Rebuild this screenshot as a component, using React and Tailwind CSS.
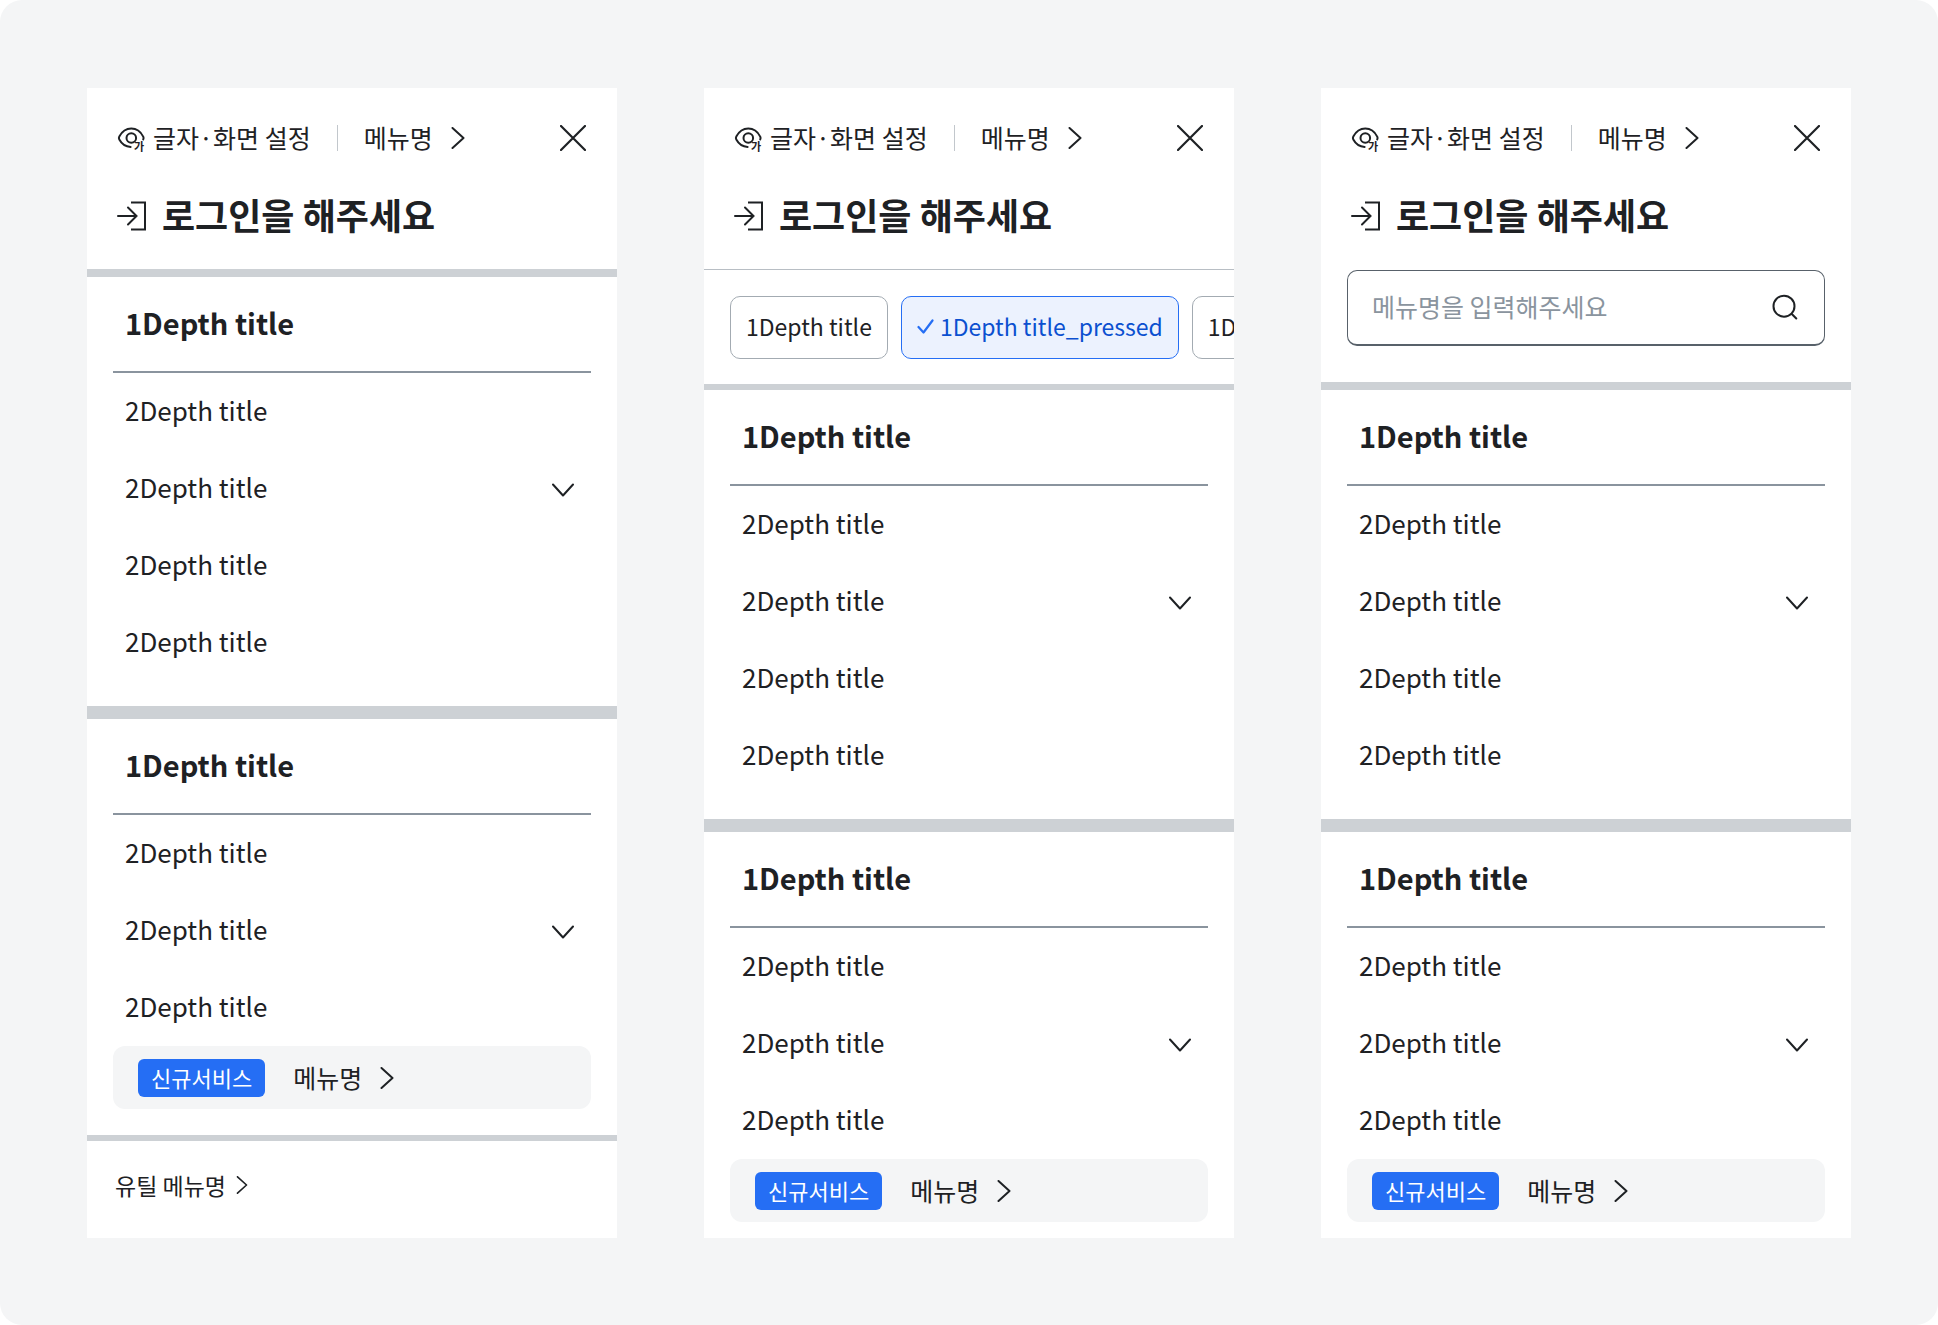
import { useState } from 'react';

const FIRST_MENU = [
  { id: 'a1', label: '2Depth title' },
  { id: 'a2', label: '2Depth title', expandable: true },
  { id: 'a3', label: '2Depth title' },
  { id: 'a4', label: '2Depth title' },
];

const SECOND_MENU = [
  { id: 'b1', label: '2Depth title' },
  { id: 'b2', label: '2Depth title', expandable: true },
  { id: 'b3', label: '2Depth title' },
];

const CHIPS = ['1Depth title', '1Depth title_pressed', '1Depth title'];

function EyeTextIcon() {
  return (
    <svg viewBox="0 0 28 28" className="w-7 h-7 shrink-0 overflow-visible" fill="none" stroke="currentColor" strokeWidth="2" strokeLinecap="round" aria-hidden="true">
      <path d="M26.200 15.500c.5-.9.5-2 0-2.900C23.700 7.800 19.400 4.600 14.300 4.600S4.900 7.800 2.300 12.600c-.5.900-.5 2 0 2.900C4.700 19.900 8.800 22.700 13.600 22.900" />
      <circle cx="14.300" cy="14" r="4.800" />
      <text x="17" y="27" fontSize="11" fontWeight="700" fill="currentColor" stroke="none">가</text>
    </svg>
  );
}

function LoginIcon() {
  return (
    <svg viewBox="0 -4 30 34" className="w-[30px] h-[34px] shrink-0" fill="none" stroke="currentColor" strokeWidth="2" strokeLinecap="round" aria-hidden="true">
      <path d="M1 15H19.500M11 6.500L19.500 15 11 23.500" />
      <path d="M15 1.500H28v27H15" strokeLinecap="square" />
    </svg>
  );
}

function ChevronRight({ className }) {
  return (
    <svg viewBox="0 0 14 22" className={className} fill="none" stroke="currentColor" strokeWidth="2" strokeLinecap="round" strokeLinejoin="round" aria-hidden="true">
      <path d="M1.500 1l11 10-11 10" />
    </svg>
  );
}

function ChevronDown() {
  return (
    <svg viewBox="0 -6 22 20" className="w-[22px] h-5" fill="none" stroke="currentColor" strokeWidth="2" strokeLinecap="round" strokeLinejoin="round" aria-hidden="true">
      <path d="M1 1.500l10 11 10-11" />
    </svg>
  );
}

function CloseIcon() {
  return (
    <svg viewBox="0 0 26 26" className="w-[26px] h-[26px]" fill="none" stroke="currentColor" strokeWidth="2.200" strokeLinecap="round" aria-hidden="true">
      <path d="M1 1l24 24M25 1L1 25" />
    </svg>
  );
}

function SearchIcon() {
  return (
    <svg viewBox="0 0 26 26" className="w-[26px] h-[26px]" fill="none" stroke="currentColor" strokeWidth="2" strokeLinecap="round" aria-hidden="true">
      <circle cx="12" cy="12.200" r="10.500" />
      <path d="M19.800 20l4.500 4.500" />
    </svg>
  );
}

function CheckIcon() {
  return (
    <svg viewBox="0 0 17 15" className="w-[17px] h-[15px] shrink-0 text-[#256ef4]" fill="none" stroke="currentColor" strokeWidth="2.200" strokeLinecap="round" strokeLinejoin="round" aria-hidden="true">
      <path d="M1.500 8l5 5.500 9-12" />
    </svg>
  );
}

function PanelHeader() {
  return (
    <header className="h-[181px] pt-8 pl-[30px] pr-[31px]">
      <div className="flex items-center h-[35px] text-[25px]">
        <button type="button" className="flex items-center gap-2">
          <EyeTextIcon />
          글자·화면 설정
        </button>
        <span className="w-px h-[26px] mx-[26px] bg-[#c2c7cc]" />
        <a href="#menu" className="flex items-center gap-[18px]">
          메뉴명
          <ChevronRight className="w-3.5 h-[22px]" />
        </a>
        <button type="button" aria-label="닫기" className="ml-auto">
          <CloseIcon />
        </button>
      </div>
      <a href="#login" className="flex items-center gap-[15px] mt-[35px] h-12 text-[36px] font-bold">
        <LoginIcon />
        로그인을 해주세요
      </a>
    </header>
  );
}

function MenuSection({ items, children }) {
  return (
    <section className="px-[26px]">
      <h2 className="flex items-center h-24 px-3 pb-0.5 border-b-2 border-[#8a949e] text-[29px] font-bold">
        1Depth title
      </h2>
      <ul className="text-[26px]">
        {items.map(item => (
          <li key={item.id}>
            {item.expandable ? (
              <button type="button" className="flex items-center justify-between w-full h-[77px] pb-1 pl-3 pr-[17px]">
                {item.label}
                <ChevronDown />
              </button>
            ) : (
              <a href="#depth2" className="flex items-center h-[77px] pb-1 px-3">{item.label}</a>
            )}
          </li>
        ))}
      </ul>
      {children}
    </section>
  );
}

function ServiceBanner() {
  return (
    <div className="flex items-center h-[63px] px-[25px] rounded-xl bg-[#f4f5f6]">
      <span className="flex items-center h-[38px] px-[13px] rounded-md bg-[#256ef4] text-white text-[22px]">
        신규서비스
      </span>
      <a href="#service" className="flex items-center gap-[18px] ml-7">
        메뉴명
        <ChevronRight className="w-3.5 h-[22px]" />
      </a>
    </div>
  );
}

function ChipBar() {
  const [selected, setSelected] = useState(1);

  return (
    <div className="flex gap-[13px] h-[121px] px-[26px] pt-[26px] border-t border-b-[6px] border-t-[#b8bec4] border-b-[#cdd1d5] overflow-hidden text-[23px]">
      {CHIPS.map((chip, i) => (
        <button
          key={i}
          type="button"
          aria-pressed={selected === i}
          onClick={() => setSelected(i)}
          className={`flex items-center gap-1.5 shrink-0 h-[63px] px-[15px] pb-0.5 rounded-[10px] border ${
            selected === i ? 'border-[#256ef4] bg-[#ecf2fe] text-[#0b50d0]' : 'border-[#a3abb2] bg-white'
          }`}
        >
          {selected === i && <CheckIcon />}
          {chip}
        </button>
      ))}
    </div>
  );
}

function SearchBar() {
  return (
    <form role="search" onSubmit={e => e.preventDefault()} className="h-[121px] px-[26px] pt-px border-b-8 border-[#cdd1d5]">
      <div className="flex items-center h-[76px] pb-px pl-6 pr-[26px] rounded-[10px] border border-b-2 border-[#58616a]">
        <input
          type="search"
          aria-label="메뉴 검색"
          placeholder="메뉴명을 입력해주세요"
          className="flex-1 min-w-0 bg-transparent outline-none placeholder:text-[#8a949e]"
        />
        <button type="submit" aria-label="검색">
          <SearchIcon />
        </button>
      </div>
    </form>
  );
}

function MenuPanel({ toolbar, footer }) {
  return (
    <nav className="flex-1 min-w-0 flex flex-col bg-white">
      <PanelHeader />
      {toolbar}
      <MenuSection items={FIRST_MENU} />
      <div className="h-[13px] mt-[25px] bg-[#cdd1d5]" />
      <MenuSection items={SECOND_MENU}>
        <ServiceBanner />
      </MenuSection>
      {footer || <div className="h-4" />}
    </nav>
  );
}

export default function App() {
  return (
    <div className="bg-white">
      <main className="flex gap-[87px] px-[87px] pt-[88px] pb-[87px] min-h-screen rounded-[22px] bg-[#f4f5f6] text-[25px] text-[#1e2124] whitespace-nowrap font-['Noto_Sans_CJK_KR',sans-serif]">
        <MenuPanel
          toolbar={<div className="h-2 bg-[#cdd1d5]" />}
          footer={
            <footer className="mt-[26px] border-t-[6px] border-[#cdd1d5]">
              <a href="#util" className="flex items-center gap-2.5 h-[88px] pl-7 text-[23px]">
                유틸 메뉴명
                <ChevronRight className="w-3 h-[18px]" />
              </a>
            </footer>
          }
        />
        <MenuPanel toolbar={<ChipBar />} />
        <MenuPanel toolbar={<SearchBar />} />
      </main>
    </div>
  );
}
